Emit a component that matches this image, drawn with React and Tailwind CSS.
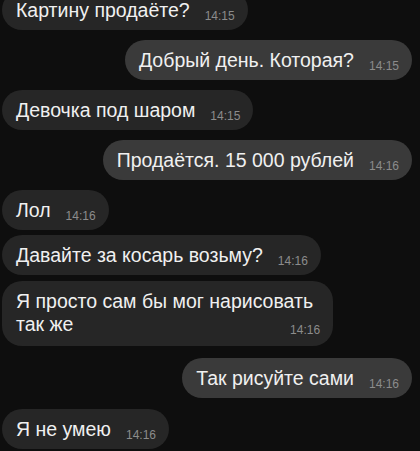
const messages = [
  { id: 1, out: false, text: 'Картину продаёте?', time: '14:15', mt: '-mt-[10px]' },
  { id: 2, out: true, text: 'Добрый день. Которая?', time: '14:15', mt: 'mt-[10px]' },
  { id: 3, out: false, text: 'Девочка под шаром', time: '14:15', mt: 'mt-[10px]' },
  { id: 4, out: true, text: 'Продаётся. 15 000 рублей', time: '14:16', mt: 'mt-[10px]' },
  { id: 5, out: false, text: 'Лол', time: '14:16', mt: 'mt-[10px]' },
  { id: 6, out: false, text: 'Давайте за косарь возьму?', time: '14:16', mt: 'mt-[5px]' },
  { id: 7, out: false, lines: ['Я просто сам бы мог нарисовать', 'так же'], time: '14:16', mt: 'mt-[6px]' },
  { id: 8, out: true, text: 'Так рисуйте сами', time: '14:16', mt: 'mt-[12px]' },
  { id: 9, out: false, text: 'Я не умею', time: '14:16', mt: 'mt-[11px]' },
];

function Time({ value, className = '' }) {
  return (
    <span className={`ml-[15px] shrink-0 translate-y-[3px] text-[12px] leading-[12px] text-[#8c8c8c] ${className}`}>
      {value}
    </span>
  );
}

function Bubble({ msg }) {
  const color = msg.out ? 'bg-[#3a3a3a]' : 'bg-[#262626]';
  const side = msg.out ? 'self-end mr-2' : 'self-start ml-[2px]';

  if (msg.lines) {
    return (
      <div className={`${side} ${msg.mt} ${color} rounded-[20px] pl-[14px] pr-[20px] pt-[9px] pb-[10px] text-[19.5px] leading-[23px] text-[#f0f0f0]`}>
        <div>{msg.lines[0]}</div>
        <div className="flex items-baseline justify-between">
          <span>{msg.lines[1]}</span>
          <Time value={msg.time} className="-mr-[7px]" />
        </div>
      </div>
    );
  }

  return (
    <div className={`${side} ${msg.mt} ${color} flex items-baseline rounded-full pl-[14px] pr-[13px] py-[9px] text-[19.5px] leading-[22px] text-[#f0f0f0]`}>
      <span>{msg.text}</span>
      <Time value={msg.time} />
    </div>
  );
}

export default function App() {
  return (
    <div
      className="flex h-[451px] w-[420px] flex-col overflow-hidden bg-[#0e0e0e]"
      style={{ fontFamily: '"Liberation Sans", Arial, sans-serif' }}
    >
      {messages.map((m) => (
        <Bubble key={m.id} msg={m} />
      ))}
    </div>
  );
}
